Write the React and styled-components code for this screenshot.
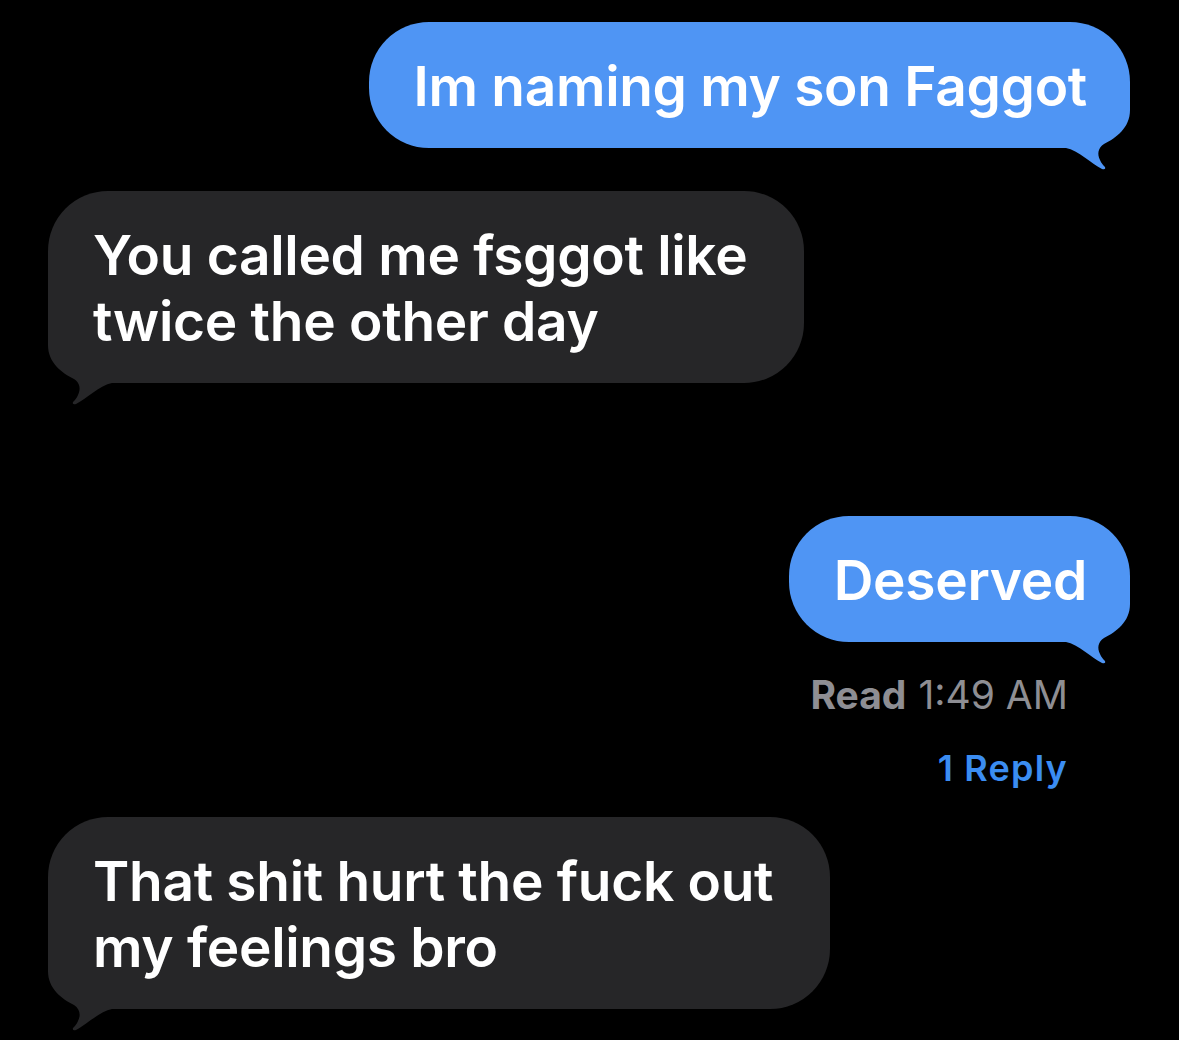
import React from 'react';
import styled, { createGlobalStyle } from 'styled-components';

const GlobalStyle = createGlobalStyle`
  html, body {
    margin: 0;
    background: #000;
  }
  body {
    font-family: Inter, "Noto Sans", "Liberation Sans", sans-serif;
    -webkit-font-smoothing: antialiased;
  }
`;

const COLORS = {
  out: '#4f95f4',
  in: '#262628',
};

const Thread = styled.div`
  display: flex;
  flex-direction: column;
  padding: 22px 49px 40px 48px;
  min-height: 1040px;
  box-sizing: border-box;
  background: #000;
`;

const Row = styled.div`
  display: flex;
  justify-content: ${(p) => (p.$side === 'out' ? 'flex-end' : 'flex-start')};
  margin-top: ${(p) => p.$gap || 0}px;
`;

const Bubble = styled.div`
  position: relative;
  background: ${(p) => COLORS[p.$side]};
  color: #fff;
  border-radius: 60px;
  padding: ${(p) => (p.$side === 'out' ? '31px 43px 29px 45px' : '31px 57px 29px 45px')};
  font-size: 55px;
  font-weight: 600;
  line-height: 66px;
  letter-spacing: -0.3px;
  white-space: nowrap;
`;

const Line = styled.div`
  position: relative;
  z-index: 1;
`;

const TailSvg = styled.svg`
  position: absolute;
  z-index: 0;
  bottom: -22px;
  ${(p) => (p.$side === 'out' ? 'right: 0;' : 'left: 0; transform: scaleX(-1);')}
  width: 72px;
  height: 86px;
  display: block;
`;

const Meta = styled.div`
  display: flex;
  justify-content: flex-end;
  gap: 12px;
  margin-top: ${(p) => p.$gap}px;
  padding-right: 62px;
  font-size: ${(p) => p.$size}px;
  line-height: ${(p) => p.$size + 6}px;
  color: ${(p) => p.$color};
  font-weight: ${(p) => p.$weight || 400};
  letter-spacing: ${(p) => p.$tracking || 0}px;
`;

const Strong = styled.span`
  font-weight: 700;
`;

// corner fill plus the little curl that hangs under the bubble
const Tail = ({ side }) => (
  <TailSvg $side={side} viewBox="0 0 72 86">
    <path
      fill={COLORS[side]}
      d="M0 0 H72 V26 C72 44 58 54 46 60 C40 64 39 70 42 76 C43 79 46 82 47 83 Q48 86 44 85 C34 80 20 66 8 64 L0 64 Z"
    />
  </TailSvg>
);

const Message = ({ side, gap, lines }) => (
  <Row $side={side} $gap={gap}>
    <Bubble $side={side}>
      {lines.map((l, i) => (
        <Line key={i}>{l}</Line>
      ))}
      <Tail side={side} />
    </Bubble>
  </Row>
);

export default function App() {
  return (
    <>
      <GlobalStyle />
      <Thread>
        <Message side="out" lines={['Im naming my son Faggot']} />
        <Message side="in" gap={43} lines={['You called me fsggot like', 'twice the other day']} />
        <Message side="out" gap={133} lines={['Deserved']} />
        <Meta $gap={30} $size={39} $color="#8e8e93">
          <Strong>Read</Strong>
          <span>1:49 AM</span>
        </Meta>
        <Meta $gap={30} $size={36} $color="#3b8df2" $weight={600} $tracking={1.2}>
          1 Reply
        </Meta>
        <Message side="in" gap={28} lines={['That shit hurt the fuck out', 'my feelings bro']} />
      </Thread>
    </>
  );
}
